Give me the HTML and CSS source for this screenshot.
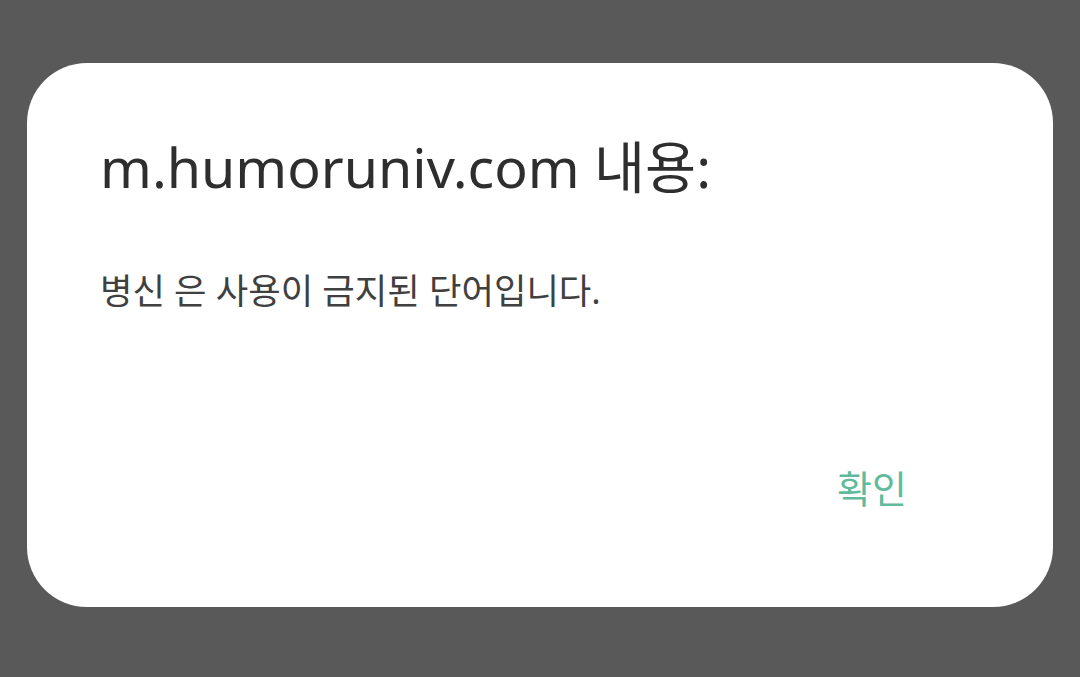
FILE: index.html
```html
<!DOCTYPE html>
<html lang="ko">
<head>
  <meta charset="UTF-8" />
  <meta name="viewport" content="width=device-width, initial-scale=1.0"/>
  <title>m.humoruniv.com 내용:</title>
  <link rel="stylesheet" href="styles.css">
</head>
<body>
  <div class="dialog">
    <h1 class="dialog-title">m.humoruniv.com 내용:</h1>
    <p class="dialog-message">병신 은 사용이 금지된 단어입니다.</p>
    <div class="dialog-actions">
      <button class="ok-btn">확인</button>
    </div>
  </div>
</body>
</html>
```

FILE: styles.css
```css
* {
  margin: 0;
  padding: 0;
  box-sizing: border-box;
}

body {
  font-family: 'Noto Sans', 'Noto Sans CJK KR', sans-serif;
  background-color: #595959;
  width: 1080px;
  height: 677px;
  padding: 63px 27px 70px 27px;
}

.dialog {
  background-color: #ffffff;
  border-radius: 60px;
  height: 544px;
  padding: 68px 73px 0 73px;
  display: flex;
  flex-direction: column;
}

.dialog-title {
  font-size: 55.5px;
  font-weight: 400;
  color: #2e2e2e;
  line-height: 72px;
}

.dialog-message {
  font-size: 35.3px;
  font-weight: 400;
  color: #404040;
  line-height: 48px;
  margin-top: 63px;
}

.dialog-actions {
  display: flex;
  justify-content: flex-end;
  margin-top: 148px;
  padding-right: 73px;
}

.ok-btn {
  font-family: 'Noto Sans CJK KR', sans-serif;
  font-size: 38px;
  color: #5fbb9b;
  background: none;
  border: none;
  line-height: 50px;
}
```
